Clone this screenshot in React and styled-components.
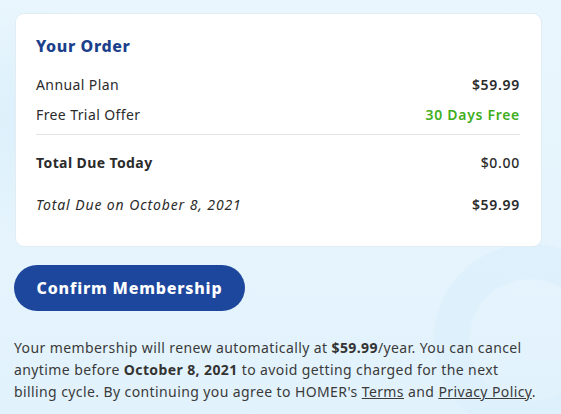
import styled, { createGlobalStyle } from "styled-components";

const GlobalStyle = createGlobalStyle`
  html, body {
    margin: 0;
    padding: 0;
  }
  body {
    font-family: "Noto Sans", "Open Sans", sans-serif;
    color: #333;
    background-color: #e4f3fc;
    background-image:
      radial-gradient(circle at 530px 340px, rgba(255, 255, 255, 0) 60px, rgba(219, 239, 251, 0.7) 62px, rgba(219, 239, 251, 0.7) 95px, rgba(255, 255, 255, 0) 97px),
      radial-gradient(circle at 20px 120px, #dcf0fb 0, rgba(228, 243, 252, 0) 120px),
      linear-gradient(180deg, #e9f6fd 0%, #e2f2fc 100%);
    min-height: 414px;
  }
`;

export default function App() {
  return (
    <>
      <GlobalStyle />
      <Page>
        <Card>
          <Title>Your Order</Title>
          <Row>
            <Label>Annual Plan</Label>
            <Amount>$59.99</Amount>
          </Row>
          <Row>
            <Label>Free Trial Offer</Label>
            <Amount green>30 Days Free</Amount>
          </Row>
          <Divider />
          <Row spaced>
            <Label bold>Total Due Today</Label>
            <Amount light>$0.00</Amount>
          </Row>
          <Row spaced>
            <Label italic>Total Due on October 8, 2021</Label>
            <Amount>$59.99</Amount>
          </Row>
        </Card>
        <ConfirmButton>Confirm Membership</ConfirmButton>
        <Note>
          Your membership will renew automatically at <b>$59.99</b>/year. You
          can cancel anytime before <b>October 8, 2021</b> to avoid getting
          charged for the next billing cycle. By continuing you agree to
          HOMER's <NoteLink href="#">Terms</NoteLink> and{" "}
          <NoteLink href="#">Privacy Policy</NoteLink>.
        </Note>
      </Page>
    </>
  );
}

const Page = styled.div`
  padding: 13px 20px 0 14px;
  display: flex;
  flex-direction: column;
  align-items: flex-start;
  letter-spacing: 0.4px;
`;

const Card = styled.div`
  box-sizing: border-box;
  width: 527px;
  margin-left: 1px;
  background: #fff;
  border: 1px solid #e1ecf3;
  border-radius: 9px;
  padding: 22px 21px 27px 20px;
  display: flex;
  flex-direction: column;
  align-self: stretch;
`;

const Title = styled.h2`
  margin: 0 0 12px;
  font-size: 16px;
  font-weight: 800;
  color: #1c3f8c;
  line-height: 20px;
  letter-spacing: 0.6px;
`;

const Row = styled.div`
  display: flex;
  justify-content: space-between;
  align-items: center;
  height: 30px;
  margin-top: ${(p) => (p.spaced ? "12px" : "0")};

  &:first-of-type {
    margin-top: 1px;
  }
`;

const Label = styled.span`
  font-size: 14px;
  color: #2b2b2b;
  font-weight: ${(p) => (p.bold ? 700 : 400)};
  font-style: ${(p) => (p.italic ? "italic" : "normal")};
  letter-spacing: ${(p) => (p.italic ? "0.9px" : "0.4px")};
`;

const Amount = styled.span`
  font-size: 14px;
  font-weight: ${(p) => (p.light ? 500 : 600)};
  color: ${(p) => (p.green ? "#3fae1c" : "#2b2b2b")};
  letter-spacing: 0.7px;
`;

const Divider = styled.hr`
  width: 100%;
  border: 0;
  border-top: 1px solid #e3e3e3;
  margin: 5px 0 0;
`;

const ConfirmButton = styled.button`
  margin-top: 18px;
  height: 46px;
  width: 231px;
  border: 0;
  border-radius: 23px;
  background: #1d479d;
  color: #fff;
  font-family: "Noto Sans", sans-serif;
  font-size: 16px;
  font-weight: 800;
  letter-spacing: 0.8px;
  cursor: pointer;
`;

const Note = styled.p`
  margin: 26px 0 0;
  font-size: 14px;
  line-height: 22px;
  color: #3a3a3a;
  max-width: 527px;

  b {
    font-weight: 700;
    color: #333;
  }
`;

const NoteLink = styled.a`
  color: #3a3a3a;
  text-decoration: underline;
`;
